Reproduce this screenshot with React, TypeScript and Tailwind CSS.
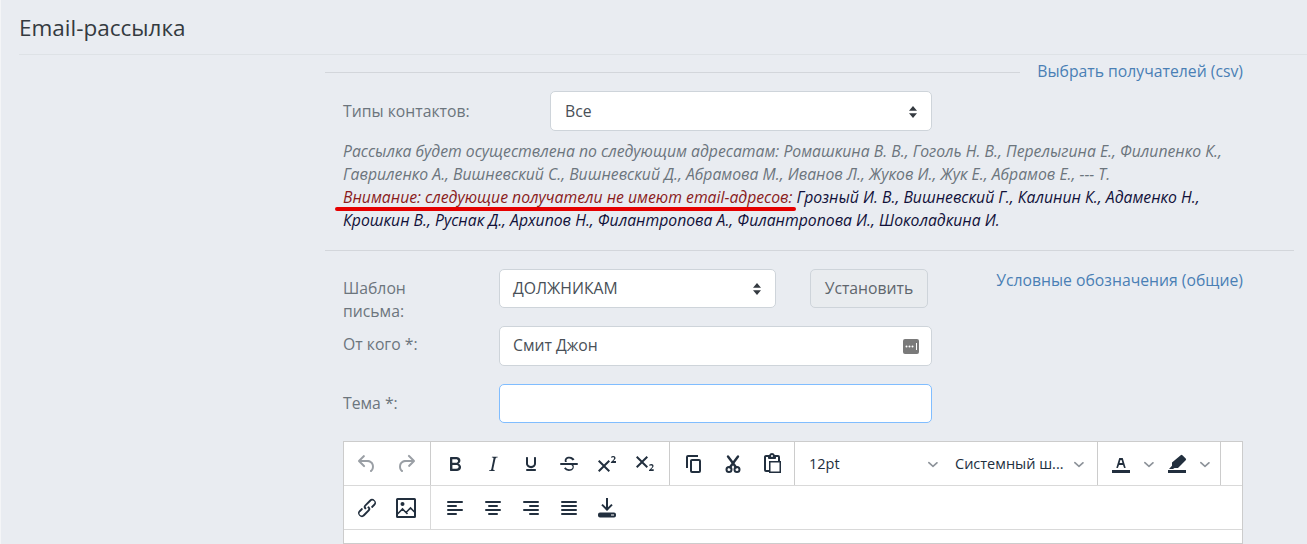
const font = { fontFamily: '"Open Sans", "Noto Sans", sans-serif' }

function Icon({ d, className = '', children }: { d?: string; className?: string; children?: React.ReactNode }) {
  return (
    <svg viewBox="0 0 24 24" width="24" height="24" className={className} fill="currentColor">
      {d && <path d={d} />}
      {children}
    </svg>
  )
}

function Bars({ rows }: { rows: [number, number][] }) {
  return (
    <Icon>
      {rows.map(([x, w], i) => (
        <rect key={i} x={x} y={5 + i * 4} width={w} height="2" rx="1" />
      ))}
    </Icon>
  )
}

function ToolBtn({ children, muted, w = 'w-[34px]' }: { children: React.ReactNode; muted?: boolean; w?: string }) {
  return (
    <button className={`flex h-[34px] shrink-0 items-center justify-center ${w} ${muted ? 'text-[#9a9fa5]' : 'text-[#222f3e]'}`}>
      {children}
    </button>
  )
}

function Chevron({ className = '' }: { className?: string }) {
  return (
    <svg viewBox="0 0 10 10" width="10" height="10" className={`shrink-0 text-[#8d939a] ${className}`} fill="currentColor">
      <path d="M.3 3.1a.8.8 0 0 1 1.1 0L5 6.3l3.6-3.2a.8.8 0 0 1 1.1 1.1L5.5 8a.8.8 0 0 1-1 0L.3 4.200a.8.8 0 0 1 0-1.100z" />
    </svg>
  )
}

function Carets() {
  return (
    <svg viewBox="0 0 8 12" width="8" height="12" className="text-[#343a40]" fill="currentColor">
      <path d="M4 0 8 4.700H0zM4 12 0 7.300H8z" />
    </svg>
  )
}

function Group({ children, className = '' }: { children: React.ReactNode; className?: string }) {
  return (
    <div className={`flex h-full shrink-0 items-center border-r border-[#cccccc] ${className}`}>{children}</div>
  )
}

function Toolbar() {
  return (
    <div className="flex flex-1 flex-col border border-[#cccccc] bg-white">
      <div className="flex h-[44px] border-b border-[#d9d9d9]">
        <Group className="w-[87px] gap-[5px] pl-[6px]">
          <ToolBtn muted>
            <Icon d="M6.400 8H12c3.700 0 6.200 2 6.800 5.100.6 2.700-.4 5.600-2.300 6.800a1 1 0 0 1-1-1.800c1.100-.6 1.800-2.700 1.400-4.600-.5-2.100-2.100-3.500-4.900-3.500H6.400l3.300 3.300a1 1 0 1 1-1.400 1.400l-5-5a1 1 0 0 1 0-1.400l5-5a1 1 0 0 1 1.400 1.400L6.400 8z" />
          </ToolBtn>
          <ToolBtn muted>
            <Icon d="M17.600 10H12c-2.800 0-4.400 1.400-4.900 3.500-.4 2 .3 4 1.400 4.600a1 1 0 1 1-1 1.800c-2-1.200-2.900-4.100-2.300-6.800.6-3 3-5.100 6.800-5.100h5.600l-3.300-3.300a1 1 0 1 1 1.400-1.400l5 5a1 1 0 0 1 0 1.400l-5 5a1 1 0 0 1-1.400-1.400l3.300-3.300z" />
          </ToolBtn>
        </Group>
        <Group className="w-[239px] gap-[4px] pl-[7px]">
          <ToolBtn>
            <Icon d="M7.800 19c-.3 0-.5 0-.6-.2l-.2-.5V5.700c0-.2 0-.4.2-.5l.6-.2h5c1.500 0 2.700.3 3.500 1 .7.6 1.100 1.400 1.100 2.500a3 3 0 0 1-.6 1.900c-.4.6-1 1-1.600 1.200.4.1.9.3 1.300.6s.8.7 1 1.200c.4.4.5 1 .5 1.600 0 1.300-.4 2.300-1.300 3-.8.7-2.100 1-3.800 1H7.800zm5-8.300c.6 0 1.200-.1 1.600-.5.4-.3.6-.7.6-1.300 0-1.100-.8-1.700-2.300-1.700H9.300v3.500h3.500zm.5 6c.7 0 1.300-.1 1.700-.4.4-.4.6-.9.6-1.500s-.2-1-.7-1.400c-.4-.3-1-.4-2-.4H9.400v3.700h3.900z" />
          </ToolBtn>
          <ToolBtn>
            <Icon d="M16.700 4.700l-.1.900h-.3c-.6 0-1 0-1.400.3-.3.3-.4.6-.5 1.100l-2.100 9.800v.6c0 .5.4.8 1.400.8h.2l-.2.8H8l.2-.8h.2c1.100 0 1.800-.5 2-1.500l2-9.800.1-.5c0-.6-.4-.8-1.400-.8h-.3l.2-.9h5.800z" />
          </ToolBtn>
          <ToolBtn>
            <Icon d="M16 5c.6 0 1 .4 1 1v5.500a4 4 0 0 1-.4 1.800l-1 1.400a5.300 5.300 0 0 1-5.500 1 5 5 0 0 1-1.600-1c-.5-.4-.8-.9-1.100-1.400a4 4 0 0 1-.4-1.800V6c0-.6.4-1 1-1s1 .4 1 1v5.500c0 .3 0 .6.2 1l.6.7a3.300 3.300 0 0 0 2.200.8 3.400 3.400 0 0 0 2.200-.8c.3-.2.4-.5.6-.8l.2-.9V6c0-.6.4-1 1-1zM8 17h8c.6 0 1 .4 1 1s-.4 1-1 1H8a1 1 0 0 1 0-2z" />
          </ToolBtn>
          <ToolBtn>
            <Icon d="M15.600 8.500c-.5-.7-1-1.100-1.300-1.300-.6-.4-1.300-.6-2-.6-2.700 0-2.800 1.700-2.800 2.100 0 .5.200.9.400 1.300H8a3.500 3.500 0 0 1-.3-1.300C7.700 7 8.700 4.800 12.400 4.800c1.500 0 2.700.4 3.700 1.100.7.5 1.100 1.100 1.400 1.500l-1.900 1.100zM4 11h16a1 1 0 0 1 0 2h-3.600c.3.600.4 1.200.4 1.800 0 1.400-.7 4.100-5 4.100A6.200 6.200 0 0 1 7 16.400l1.500-1.100c.4.600 1.600 2 3.700 2 1.600 0 2.500-.4 3-1 .3-.4.400-.9.400-1.300 0-.4-.1-.7-.3-1a5 5 0 0 0-1-1H4a1 1 0 0 1 0-2z" />
          </ToolBtn>
          <ToolBtn>
            <Icon d="M15 9.400 10.400 14l4.600 4.600-1.400 1.400L9 15.400 4.400 20 3 18.600 7.600 14 3 9.400 4.400 8 9 12.600 13.600 8 15 9.400zm5.900 1.600h-5v-1l1-.8 1.700-1.600c.3-.5.5-.9.5-1.300 0-.3 0-.5-.2-.7-.2-.2-.5-.3-.9-.3l-.8.2-.7.4-.4-1.200c.2-.2.5-.4 1-.5.300-.2.800-.2 1.200-.2.700 0 1.200.2 1.600.5.4.4.600.9.600 1.400s-.1.800-.3 1.200a8.400 8.400 0 0 1-1.800 2H21v1.100z" />
          </ToolBtn>
          <ToolBtn>
            <Icon d="M10.400 10l4.600 4.600-1.400 1.400L9 11.400 4.400 16 3 14.600 7.600 10 3 5.400 4.400 4 9 8.600 13.600 4 15 5.400 10.400 10zM21 19h-5v-1l1-.8 1.700-1.600c.3-.4.500-.8.500-1.200 0-.3 0-.6-.2-.7-.2-.2-.5-.3-.9-.3a2 2 0 0 0-.8.200l-.7.300-.4-1.100 1-.6 1.200-.2c.6 0 1.200.2 1.500.5.4.4.600.8.600 1.400 0 .5-.2 1-.5 1.400l-1.300 1.400-.6.500h2.600V19z" />
          </ToolBtn>
        </Group>
        <Group className="w-[125px] gap-[5px] pl-[7px]">
          <ToolBtn>
            <Icon d="M16 3H6a2 2 0 0 0-2 2v11h2V5h10V3zm1 4a2 2 0 0 1 2 2v10a2 2 0 0 1-2 2h-7a2 2 0 0 1-2-2V9c0-1.200.9-2 2-2h7zm0 12V9h-7v10h7z" />
          </ToolBtn>
          <ToolBtn>
            <Icon>
              <g fill="none" stroke="currentColor" strokeWidth="2">
                <circle cx="8" cy="17.500" r="2.500" />
                <circle cx="16" cy="17.500" r="2.500" />
                <path d="M7 4.500 15 15.200M17 4.500 9 15.200" strokeLinecap="round" strokeWidth="2.400" />
              </g>
            </Icon>
          </ToolBtn>
          <ToolBtn>
            <Icon d="M18 9V5h-2v1c0 .6-.4 1-1 1H9a1 1 0 0 1-1-1V5H6v13h3V9h9zM9 20H6a2 2 0 0 1-2-2V5c0-1.100.9-2 2-2h3.200A3 3 0 0 1 12 1a3 3 0 0 1 2.800 2H18a2 2 0 0 1 2 2v4h1v12H9v-1zm1.500-9.500v9h9v-9h-9zM12 3a1 1 0 1 0 0 2 1 1 0 0 0 0-2z" />
          </ToolBtn>
        </Group>
        <Group className="w-[303px] text-[14.500px] text-[#222f3e]">
          <span className="w-[133px] pl-[14px]">12pt</span>
          <Chevron />
          <span className="ml-[17px] w-[119px] whitespace-nowrap">Системный ш...</span>
          <Chevron />
        </Group>
        <Group className="w-[123px] pl-[9px]">
          <ToolBtn w="w-[28px]">
            <Icon>
              <path d="M3 18h18v3H3z" />
              <path d="M8.700 16h-.8a.5.5 0 0 1-.5-.6l2.700-9c.1-.3.3-.4.5-.4h2.800c.2 0 .4.1.5.4l2.700 9a.5.5 0 0 1-.5.6h-.8a.5.5 0 0 1-.4-.4l-.7-2.200c0-.3-.3-.4-.5-.4h-3.400c-.2 0-.4.1-.5.4l-.7 2.200c0 .3-.2.4-.4.400zm2.600-7.600l-.6 2a.5.5 0 0 0 .5.6h1.600a.5.5 0 0 0 .5-.6l-.6-2c0-.3-.3-.4-.5-.4h-.4c-.2 0-.4.1-.5.4z" />
            </Icon>
          </ToolBtn>
          <Chevron className="ml-[9px]" />
          <ToolBtn w="w-[28px] ml-[9px]">
            <Icon>
              <path d="M3 18h18v3H3z" />
              <path d="M15.700 3.300a1.200 1.200 0 0 1 1.700 0l3.300 3.300a1.200 1.200 0 0 1 0 1.700L13 16H9.500L8 17H4l3-3.200V10.500z" />
            </Icon>
          </ToolBtn>
          <Chevron className="ml-[9px]" />
        </Group>
      </div>
      <div className="flex h-[44px] border-b border-[#d9d9d9]">
        <Group className="w-[87px] gap-[5px] border-[#d9d9d9] pl-[6px]">
          <ToolBtn>
            <Icon d="M6.200 12.300a1 1 0 0 1 1.400 1.400l-2 2a2 2 0 1 0 2.600 2.800l4.800-4.800a1 1 0 0 0 0-1.400 1 1 0 1 1 1.400-1.300 2.900 2.900 0 0 1 0 4L9.600 20a3.900 3.900 0 0 1-5.500-5.500l2-2zm11.600-.6a1 1 0 0 1-1.400-1.400l2-2a2 2 0 1 0-2.600-2.800L11 10a1 1 0 0 0 0 1.400A1 1 0 1 1 9.600 13a2.900 2.900 0 0 1 0-4L14.400 4a3.900 3.900 0 0 1 5.500 5.500l-2 2z" />
          </ToolBtn>
          <ToolBtn>
            <Icon>
              <g fill="none" stroke="currentColor" strokeWidth="2">
                <rect x="3" y="3" width="18" height="18" rx="0.500" />
                <path d="M3.500 18 8.500 13l5 5M12 16.500 16.500 12l4.500 4.500" strokeWidth="1.600" />
              </g>
              <circle cx="8.500" cy="8" r="2" />
            </Icon>
          </ToolBtn>
        </Group>
        <div className="flex items-center gap-[4px] pl-[7px]">
          <ToolBtn>
            <Bars rows={[[4, 16], [4, 10], [4, 16], [4, 10]]} />
          </ToolBtn>
          <ToolBtn>
            <Bars rows={[[4, 16], [7, 10], [4, 16], [7, 10]]} />
          </ToolBtn>
          <ToolBtn>
            <Bars rows={[[4, 16], [10, 10], [4, 16], [10, 10]]} />
          </ToolBtn>
          <ToolBtn>
            <Bars rows={[[4, 16], [4, 16], [4, 16], [4, 16]]} />
          </ToolBtn>
          <ToolBtn>
            <Icon>
              <path d="M11 2h2v9.200l3.300-3.300 1.400 1.400L12 15 6.300 9.300l1.400-1.400L11 11.200z" />
              <path d="M5 16.500h14a2 2 0 0 1 2 2v1a2 2 0 0 1-2 2H5a2 2 0 0 1-2-2v-1a2 2 0 0 1 2-2zm11 2v1h3v-1z" fillRule="evenodd" />
            </Icon>
          </ToolBtn>
        </div>
      </div>
      <div className="flex-1" />
    </div>
  )
}

export default function App() {
  return (
    <div className="flex h-[544px] flex-col overflow-hidden border-l border-[#f4f5f7] bg-[#e9ecf1] text-[15.750px] text-[#6c757d]" style={font}>
      <h1 className="ml-[18px] flex h-[55px] shrink-0 items-center border-b border-[#dee2e6] pt-[2px] text-[22.500px] text-[#343a40]">
        Email-рассылка
      </h1>

      <div className="ml-[324px] mr-[64px] flex min-h-0 flex-1 flex-col">
        <div className="flex h-[33px] shrink-0 items-center">
          <div className="mr-[17px] h-px flex-1 translate-y-px bg-[#d3d6db]" />
          <a className="text-[#4a7fb5]">Выбрать получателей (csv)</a>
        </div>

        <div className="pl-[18px]">
          <div className="mt-[3px] flex items-center">
            <label className="w-[207px] translate-y-px">Типы контактов:</label>
            <div className="flex h-[40px] w-[382px] items-center justify-between rounded-[5px] border border-[#ced4da] bg-white px-[14px] pt-[1px] text-[#495057]">
              Все
              <Carets />
            </div>
          </div>

          <div className="relative mt-[9px] h-[92px] text-[15.750px] italic leading-[23.100px]">
            <p>
              Рассылка будет осуществлена по следующим адресатам: Ромашкина В. В., Гоголь Н. В., Перелыгина Е., Филипенко К.,
              <br />
              Гавриленко А., Вишневский С., Вишневский Д., Абрамова М., Иванов Л., Жуков И., Жук Е., Абрамов Е., --- Т.
            </p>
            <p className="text-[#11113a]">
              <span className="text-[#8a1c1c]">Внимание: следующие получатели не имеют email-адресов:</span> Грозный И. В., Вишневский Г., Калинин К., Адаменко Н.,
              <br />
              Крошкин В., Руснак Д., Архипов Н., Филантропова А., Филантропова И., Шоколадкина И.
            </p>
            <div className="absolute left-[-8px] top-[67px] h-[4px] w-[461px] rounded-full bg-[#e60000]" />
          </div>
        </div>

        <div className="mr-[-51px] mt-[18px] h-px shrink-0 bg-[#d3d6db]" />

        <div className="mt-[18px] flex pl-[18px]">
          <div className="w-[589px] shrink-0">
            <div className="flex items-start">
              <label className="w-[156px] pr-[60px] pt-[8px] leading-[23px]">Шаблон письма:</label>
              <div className="flex h-[39px] w-[277px] items-center justify-between rounded-[5px] border border-[#ced4da] bg-white pl-[13px] pr-[14px] text-[#495057]">
                ДОЛЖНИКАМ
                <Carets />
              </div>
              <button className="ml-[34px] h-[39px] w-[118px] rounded-[5px] border border-[#ced4da] bg-[#e9ecef] text-[#5f666d]">
                Установить
              </button>
            </div>

            <div className="mt-[3px] flex items-center">
              <label className="w-[156px] -translate-y-[1px]">От кого *:</label>
              <div className="flex h-[40px] flex-1 items-center justify-between rounded-[5px] border border-[#ced4da] bg-white pl-[13px] pr-[12px] text-[#495057]">
                Смит Джон
                <span className="flex h-[15px] w-[16px] items-center justify-center rounded-[2px] bg-[#7a7a7a]">
                  <svg viewBox="0 0 16 15" width="16" height="15" fill="#fff">
                    <circle cx="3.500" cy="7.500" r="1" />
                    <circle cx="6.500" cy="7.500" r="1" />
                    <circle cx="9.500" cy="7.500" r="1" />
                    <rect x="13" y="4" width="1" height="7" />
                  </svg>
                </span>
              </div>
            </div>

            <div className="mt-[18px] flex items-center">
              <label className="w-[156px]">Тема *:</label>
              <div className="h-[39px] flex-1 rounded-[5px] border border-[#80bdff] bg-white" />
            </div>
          </div>
          <a className="flex-1 whitespace-nowrap text-right leading-[23px] text-[#4a7fb5]">Условные обозначения (общие)</a>
        </div>

        <div className="ml-[18px] mt-[18px] flex min-h-0 flex-1">
          <Toolbar />
        </div>
      </div>
    </div>
  )
}
